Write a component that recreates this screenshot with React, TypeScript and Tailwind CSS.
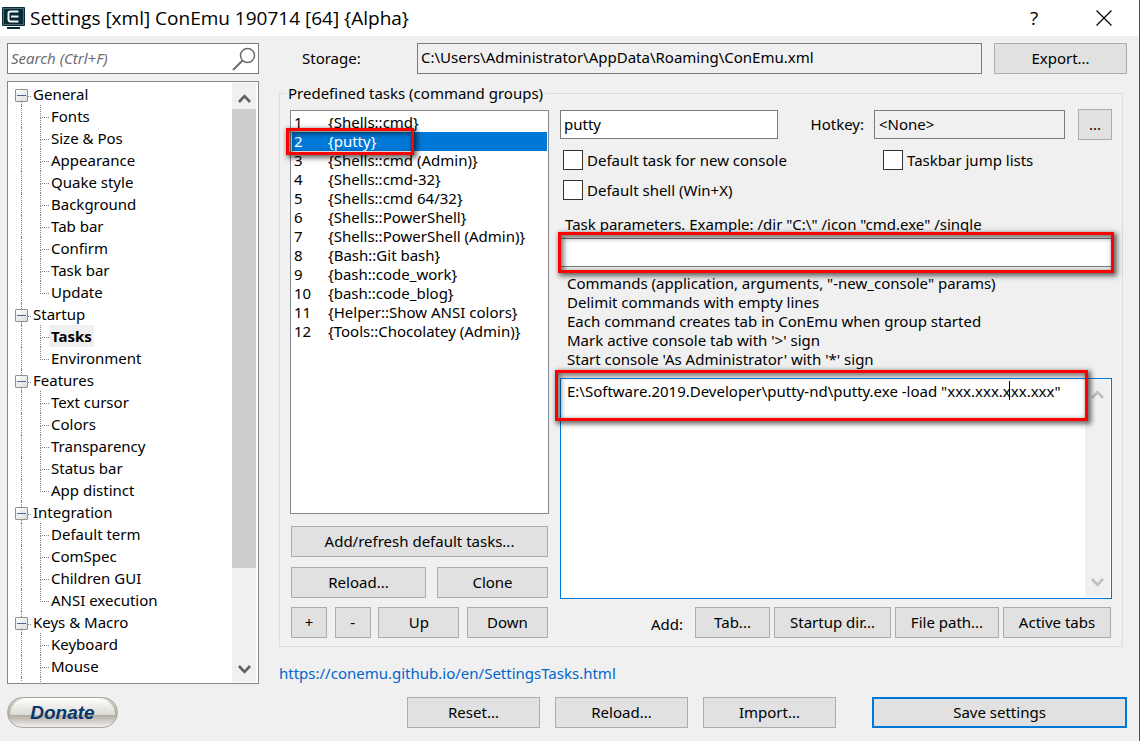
import { useState } from "react";
import type { ReactNode } from "react";

type Group = { name: string; items: string[] };

const tree: Group[] = [
  {
    name: "General",
    items: ["Fonts", "Size & Pos", "Appearance", "Quake style", "Background", "Tab bar", "Confirm", "Task bar", "Update"],
  },
  { name: "Startup", items: ["Tasks", "Environment"] },
  { name: "Features", items: ["Text cursor", "Colors", "Transparency", "Status bar", "App distinct"] },
  { name: "Integration", items: ["Default term", "ComSpec", "Children GUI", "ANSI execution"] },
  { name: "Keys & Macro", items: ["Keyboard", "Mouse", "Mark/Copy", "Paste", "Highlight"] },
];

const tasks = [
  "{Shells::cmd}",
  "{putty}",
  "{Shells::cmd (Admin)}",
  "{Shells::cmd-32}",
  "{Shells::cmd 64/32}",
  "{Shells::PowerShell}",
  "{Shells::PowerShell (Admin)}",
  "{Bash::Git bash}",
  "{bash::code_work}",
  "{bash::code_blog}",
  "{Helper::Show ANSI colors}",
  "{Tools::Chocolatey (Admin)}",
];

function Button({ children, className = "" }: { children: ReactNode; className?: string }) {
  return (
    <button
      type="button"
      className={`flex h-[31px] shrink-0 items-center justify-center border border-[#adadad] bg-[#e1e1e1] whitespace-nowrap ${className}`}
    >
      {children}
    </button>
  );
}

function Check({ children }: { children: ReactNode }) {
  return (
    <label className="flex h-5 items-center gap-1 whitespace-nowrap">
      <input type="checkbox" className="size-5 shrink-0 appearance-none border border-[#333333] bg-white" />
      {children}
    </label>
  );
}

function Highlight({ className }: { className: string }) {
  return (
    <span
      aria-hidden="true"
      className={`pointer-events-none absolute z-10 border-3 border-[#fe0000] shadow-[2px_2px_5px_1px_rgba(0,0,0,0.6),inset_2px_2px_5px_1px_rgba(0,0,0,0.5)] ${className}`}
    />
  );
}

function Arrow({ up, className }: { up?: boolean; className: string }) {
  return (
    <svg viewBox="0 0 13 9" className={`h-[9px] w-[13px] ${className}`} fill="none" stroke="currentColor" strokeWidth="2.6">
      <path d={up ? "M1 8 L6.500 2.200 L12 8" : "M1 1 L6.500 6.800 L12 1"} />
    </svg>
  );
}

function TreeView({ selected, onSelect }: { selected: string; onSelect: (name: string) => void }) {
  return (
    <div className="flex min-h-0 flex-1 border border-[#828790] bg-white py-px pr-0.5">
      <ul className="min-w-0 flex-1 overflow-hidden">
        {tree.map((group, g) => (
          <li key={group.name}>
            <div className="flex h-[22px] items-center pl-[7px]">
              <span className="flex h-[22px] w-[13px] flex-col items-center">
                <span className={`h-1.5 border-l border-dotted ${g === 0 ? "border-transparent" : "border-[#808080]"}`} />
                <button
                  type="button"
                  aria-label={`Collapse ${group.name}`}
                  className="flex size-[13px] shrink-0 items-center justify-center rounded-[1px] border border-[#919191] bg-linear-to-br from-white to-[#dcdcdc]"
                >
                  <span className="h-px w-[9px] bg-[#4b63a7]" />
                </button>
                <span className="flex-1 border-l border-dotted border-[#808080]" />
              </span>
              <span className="mt-1 w-[3px] border-t border-dotted border-[#808080]" />
              <span className="pl-0.5">{group.name}</span>
            </div>
            <ul>
              {group.items.map((item, i) => (
                <li key={item} className="flex h-[22px] pl-[13px]">
                  <span className="w-[19px] border-l border-dotted border-[#808080]" />
                  <span className="flex w-[9px] flex-col">
                    <span className="h-[13px] border-b border-l border-dotted border-[#808080]" />
                    {i < group.items.length - 1 && <span className="flex-1 border-l border-dotted border-[#808080]" />}
                  </span>
                  <button
                    type="button"
                    onClick={() => onSelect(item)}
                    className={`px-0.5 leading-[22px] ${item === selected ? "bg-[#f0f0f0] font-bold" : ""}`}
                  >
                    {item}
                  </button>
                </li>
              ))}
            </ul>
          </li>
        ))}
      </ul>
      <div className="flex w-6 flex-col bg-[#f0f0f0]">
        <span className="flex h-[26px] items-center justify-center pt-1">
          <Arrow up className="text-[#606060]" />
        </span>
        <span className="flex-1">
          <span className="block h-[84%] bg-[#cdcdcd]" />
        </span>
        <span className="flex h-[26px] items-center justify-center">
          <Arrow className="text-[#606060]" />
        </span>
      </div>
    </div>
  );
}

export default function App() {
  const [page, setPage] = useState("Tasks");
  const [current, setCurrent] = useState(1);
  const [name, setName] = useState("putty");
  const [params, setParams] = useState("");
  const [commands, setCommands] = useState(
    'E:\\Software.2019.Developer\\putty-nd\\putty.exe -load "xxx.xxx.xxx.xxx"',
  );

  return (
    <div className="flex h-screen flex-col overflow-hidden border-r border-[#4d4d4d] bg-[#f0f0f0] font-['Noto_Sans',sans-serif] text-[15px] leading-[19px] text-black">
      <header className="flex h-9 shrink-0 items-center bg-white pl-0.5">
        <svg viewBox="0 0 24 24" className="size-6 shrink-0">
          <rect x="0" y="1" width="23" height="19" rx="1" fill="#062b36" />
          <rect x="1.500" y="2.500" width="20" height="16" fill="none" stroke="#4f6a72" />
          <path d="M16.500 5.500H8.500Q6.500 5.500 6.500 7.500V13.500Q6.500 15.500 8.500 15.500H16.500M9 10.500H16.500" fill="none" stroke="#f4f4f4" strokeWidth="2" />
          <path d="M5 22H18" stroke="#062b36" strokeWidth="2" />
        </svg>
        <h1 className="ml-1 flex-1 font-['Open_Sans',sans-serif] text-[19px] leading-9 whitespace-nowrap">
          Settings [xml] ConEmu 190714 [64] {"{Alpha}"}
        </h1>
        <button type="button" aria-label="Help" className="w-[70px] font-['Open_Sans',sans-serif] text-[19px]">
          ?
        </button>
        <button type="button" aria-label="Close" className="flex w-[70px] justify-center">
          <svg viewBox="0 0 16 16" className="size-4" stroke="#000" strokeWidth="1.200">
            <path d="M0.500 0.500L15.500 15.500M15.500 0.500L0.500 15.500" />
          </svg>
        </button>
      </header>

      <main className="flex min-h-0 flex-1 gap-5 pt-[7px] pr-3 pl-[7px]">
        <nav className="flex w-[252px] shrink-0 flex-col gap-[7px]">
          <div className="flex h-[31px] shrink-0 items-center border border-[#7a7a7a] bg-white pr-0.5 pl-[3px]">
            <input
              type="search"
              aria-label="Search"
              placeholder="Search (Ctrl+F)"
              className="min-w-0 flex-1 bg-transparent italic outline-none placeholder:text-[#6d6d6d]"
            />
            <svg viewBox="0 0 24 24" className="size-6" fill="none" stroke="#6d6d6d">
              <circle cx="15.500" cy="8.500" r="7" strokeWidth="1.500" />
              <path d="M10.500 13.500L1 23" strokeWidth="2" />
            </svg>
          </div>
          <TreeView selected={page} onSelect={setPage} />
        </nav>

        <section className="flex min-w-0 flex-1 flex-col">
          <div className="flex h-[31px] shrink-0 items-center pl-[23px]">
            <label htmlFor="storage" className="w-[115px]">
              Storage:
            </label>
            <input
              id="storage"
              readOnly
              value="C:\Users\Administrator\AppData\Roaming\ConEmu.xml"
              className="mr-3 h-[31px] min-w-0 flex-1 border border-[#7a7a7a] px-[3px] pb-1 outline-none"
            />
            <Button className="w-[133px]">Export...</Button>
          </div>

          <fieldset className="mt-[9px] mr-1 flex min-h-0 min-w-0 flex-1 gap-[11px] border border-[#dcdcdc] px-2.5 pt-[7px] pb-2">
            <legend className="-ml-1 h-5 px-0.5 leading-5">Predefined tasks (command groups)</legend>

            <div className="flex w-[259px] shrink-0 flex-col">
              <ul role="listbox" aria-label="Predefined tasks" className="min-h-0 flex-1 border border-[#828790] bg-white p-px">
                {tasks.map((task, i) => (
                  <li
                    key={task}
                    role="option"
                    aria-selected={i === current}
                    onClick={() => setCurrent(i)}
                    className={`relative flex h-[19px] whitespace-nowrap first:mt-px ${i === current ? "bg-[#0078d7] text-white" : ""}`}
                  >
                    <span className="w-9 pl-0.5">{i + 1}</span>
                    <span>{task}</span>
                    {i === 1 && <Highlight className="-top-1 -left-1.5 h-[27px] w-32" />}
                  </li>
                ))}
              </ul>
              <div className="flex flex-col px-px pt-3">
                <Button>Add/refresh default tasks...</Button>
                <div className="mt-2.5 flex justify-between">
                  <Button className="w-[135px]">Reload...</Button>
                  <Button className="w-[111px]">Clone</Button>
                </div>
                <div className="mt-[9px] flex justify-between">
                  <Button className="w-9">+</Button>
                  <Button className="w-9">-</Button>
                  <Button className="w-[81px]">Up</Button>
                  <Button className="w-[81px]">Down</Button>
                </div>
              </div>
            </div>

            <div className="flex min-w-0 flex-1 flex-col">
              <div className="flex h-[29px] shrink-0 items-center">
                <input
                  aria-label="Task name"
                  value={name}
                  onChange={(e) => setName(e.target.value)}
                  className="h-[29px] w-[218px] border border-[#7a7a7a] bg-white px-[3px] pb-0.5 outline-none"
                />
                <label htmlFor="hotkey" className="mr-2.5 ml-auto">
                  Hotkey:
                </label>
                <input
                  id="hotkey"
                  readOnly
                  value="<None>"
                  className="mr-[13px] h-[29px] w-[191px] border border-[#7a7a7a] px-1 pb-0.5 outline-none"
                />
                <Button className="w-[34px]">...</Button>
              </div>
              <div className="mt-[11px] grid shrink-0 grid-cols-[310px_1fr] gap-x-2.5 gap-y-2.5 pl-[3px]">
                <Check>Default task for new console</Check>
                <Check>Taskbar jump lists</Check>
                <Check>Default shell (Win+X)</Check>
              </div>
              <label htmlFor="params" className="mt-[15px] pl-[5px]">
                Task parameters. Example: /dir "C:\" /icon "cmd.exe" /single
              </label>
              <div className="relative mt-1 flex">
                <input
                  id="params"
                  value={params}
                  onChange={(e) => setParams(e.target.value)}
                  className="h-[29px] min-w-0 flex-1 border border-[#7a7a7a] bg-white px-[3px] outline-none"
                />
                <Highlight className="-inset-x-0.5 -inset-y-1.5" />
              </div>
              <label htmlFor="commands" className="mt-[7px] pl-[7px]">
                Commands (application, arguments, "-new_console" params)
                <br />
                Delimit commands with empty lines
                <br />
                Each command creates tab in ConEmu when group started
                <br />
                Mark active console tab with '&gt;' sign
                <br />
                Start console 'As Administrator' with '*' sign
              </label>
              <div className="relative mt-[9px] flex min-h-0 flex-1 border border-[#0078d7] bg-white py-px pr-px">
                <textarea
                  id="commands"
                  value={commands}
                  spellCheck={false}
                  onChange={(e) => setCommands(e.target.value)}
                  className="min-w-0 flex-1 resize-none overflow-hidden bg-transparent pt-0.5 pl-1.5 outline-none"
                />
                <div className="flex w-[25px] flex-col items-center justify-between bg-[#f0f0f0] py-2.5">
                  <Arrow up className="text-[#bfbfbf]" />
                  <Arrow className="text-[#bfbfbf]" />
                </div>
                <span aria-hidden="true" className="absolute top-0.5 left-[448px] h-[19px] w-px bg-black" />
                <Highlight className="-top-[9px] right-[23px] -left-1.5 h-[51px]" />
              </div>
              <div className="mt-2 flex shrink-0 items-center justify-end gap-1 pr-px">
                <span className="mr-2 pt-1">Add:</span>
                <Button className="w-[75px]">Tab...</Button>
                <Button className="w-[117px]">Startup dir...</Button>
                <Button className="w-[104px]">File path...</Button>
                <Button className="w-[108px]">Active tabs</Button>
              </div>
            </div>
          </fieldset>

          <a href="https://conemu.github.io/en/SettingsTasks.html" className="mt-[15px] self-start leading-[22px] text-[#0066cc]">
            https://conemu.github.io/en/SettingsTasks.html
          </a>
        </section>
      </main>

      <footer className="flex shrink-0 items-center pt-[13px] pr-3 pb-[13px] pl-[7px]">
        <button
          type="button"
          className="relative h-[31px] w-[111px] overflow-hidden rounded-full border border-[#aaa59b] bg-linear-to-b from-[#d8d5cf] via-[#b3aea4] via-60% to-[#f2f1ef] font-['Liberation_Sans',Arial,sans-serif] text-[19px] font-bold text-[#08356b] italic"
        >
          <span aria-hidden="true" className="absolute inset-x-0.5 top-0 h-[17px] rounded-t-full rounded-b-[12px] bg-linear-to-b from-white to-[#dcdad5]" />
          <span className="relative">Donate</span>
        </button>
        <div className="ml-auto flex gap-[15px]">
          <Button className="w-[133px]">Reset...</Button>
          <Button className="w-[133px]">Reload...</Button>
          <Button className="w-[133px]">Import...</Button>
        </div>
        <Button className="ml-9 w-[255px] outline-2 -outline-offset-2 outline-[#0078d7]">Save settings</Button>
      </footer>
    </div>
  );
}
